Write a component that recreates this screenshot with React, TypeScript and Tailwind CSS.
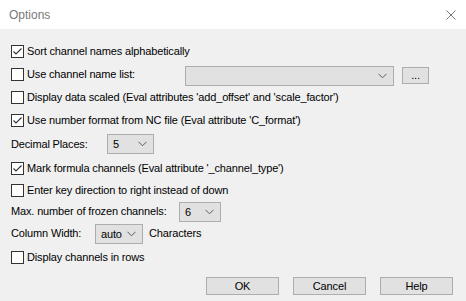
import React from 'react';

const font = { fontFamily: '"Liberation Sans", Arial, sans-serif' };

// --- Checkbox ---
const Check: React.FC<{ checked?: boolean }> = ({ checked }) => (
  <span className="w-[13px] h-[13px] border border-[#333333] bg-white flex items-center justify-center shrink-0">
    {checked && (
      <svg width="11" height="11" viewBox="0 0 11 11">
        <path d="M1.5 5.5 L4 8 L9.5 2.5" fill="none" stroke="#333333" strokeWidth="1.1" />
      </svg>
    )}
  </span>
);

const Chevron = () => (
  <svg width="9" height="6" viewBox="0 0 9 6">
    <path d="M0.5 0.8 L4.5 4.8 L8.5 0.8" fill="none" stroke="#5a5a5a" strokeWidth="1" />
  </svg>
);

// --- Dropdown ---
const Select: React.FC<{ value?: string; className?: string }> = ({ value = '', className = '' }) => (
  <div className={`h-[20px] bg-[#e1e1e1] border border-[#adadad] flex items-center justify-between pl-[5px] pr-[6px] shrink-0 ${className}`}>
    <span className="leading-none mt-[1px]">{value}</span>
    <Chevron />
  </div>
);

const Row: React.FC<{ h: string; children: React.ReactNode }> = ({ h, children }) => (
  <div className={`flex items-center whitespace-nowrap ${h}`}>{children}</div>
);

const CheckRow: React.FC<{ h: string; checked?: boolean; label: string }> = ({ h, checked, label }) => (
  <Row h={h}>
    <Check checked={checked} />
    <span className="ml-[3px]">{label}</span>
  </Row>
);

const Btn: React.FC<{ children: React.ReactNode }> = ({ children }) => (
  <button className="w-[73px] h-[18px] bg-[#e1e1e1] border border-[#adadad] leading-none text-black flex items-center justify-center">
    {children}
  </button>
);

export default function App() {
  return (
    <div className="w-[466px] h-[301px] bg-[#f0f0f0] flex flex-col text-[11px] tracking-[-0.15px] text-black" style={font}>
      <div className="h-[29px] bg-white flex items-center justify-between pl-[9px] pr-[9px] shrink-0">
        <span className="text-[12px] tracking-normal text-[#7a7a7a]">Options</span>
        <svg width="10" height="10" viewBox="0 0 10 10" className="mr-[1px]">
          <path d="M0.5 0.5 L9.5 9.5 M9.5 0.5 L0.5 9.5" stroke="#777777" strokeWidth="1" />
        </svg>
      </div>

      <div className="flex flex-col pl-[11px] pt-[11px]">
        <CheckRow h="h-[23px]" checked label="Sort channel names alphabetically" />
        <Row h="h-[23px]">
          <Check />
          <span className="ml-[3px] w-[158px]">Use channel name list:</span>
          <Select className="w-[209px] mt-[2px]" />
          <div className="w-[27px] h-[17px] ml-[8px] mt-[1px] bg-[#e1e1e1] border border-[#adadad] flex items-center justify-center leading-none">...</div>
        </Row>
        <CheckRow h="h-[23px]" label="Display data scaled (Eval attributes 'add_offset' and 'scale_factor')" />
        <CheckRow h="h-[22px]" checked label="Use number format from NC file (Eval attribute 'C_format')" />
        <Row h="h-[26px]">
          <span className="w-[96px]">Decimal Places:</span>
          <Select value="5" className="w-[47px]" />
        </Row>
        <CheckRow h="h-[23px]" checked label="Mark formula channels (Eval attribute '_channel_type')" />
        <CheckRow h="h-[21px]" label="Enter key direction to right instead of down" />
        <Row h="h-[21px]">
          <span className="w-[168px]">Max. number of frozen channels:</span>
          <Select value="6" className="w-[42px]" />
        </Row>
        <Row h="h-[23px]">
          <span className="w-[84px]">Column Width:</span>
          <Select value="auto" className="w-[48px] pl-[4px]" />
          <span className="ml-[6px]">Characters</span>
        </Row>
        <CheckRow h="h-[25px]" label="Display channels in rows" />
      </div>

      <div className="flex justify-end gap-[14px] pr-[13px] mt-[7px]">
        <Btn>OK</Btn>
        <Btn>Cancel</Btn>
        <Btn>Help</Btn>
      </div>
    </div>
  );
}
